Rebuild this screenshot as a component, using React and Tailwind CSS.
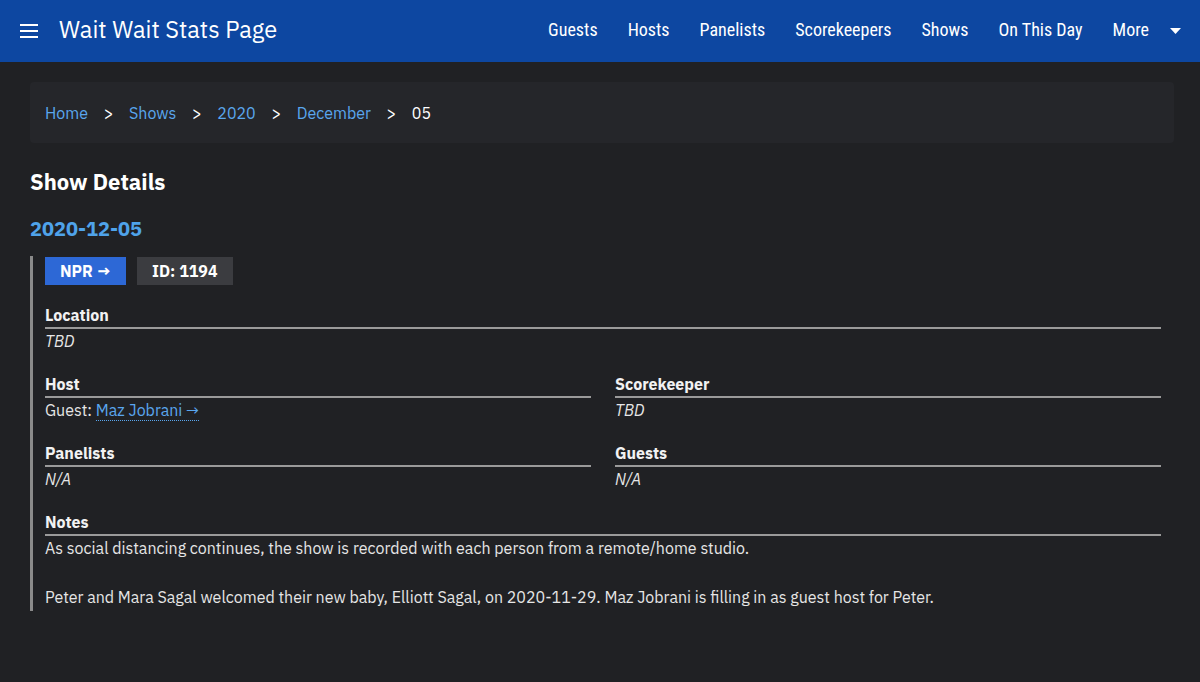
import React from 'react';

const navItems = ['Guests', 'Hosts', 'Panelists', 'Scorekeepers', 'Shows', 'On This Day'];

const Field = ({ label, children }) => (
  <div className="mb-[19px]">
    <div className="font-bold leading-6 text-[#f2f2f2] border-b-2 border-[#9a9a9a]">{label}</div>
    <div className="leading-6">{children}</div>
  </div>
);

const App = () => {
  return (
    <div
      className="min-h-[682px] bg-[#202124] text-[#e6e6e6] text-base"
      style={{ fontFamily: '"IBM Plex Sans", "Noto Sans", sans-serif' }}
    >
      <header className="h-[62px] bg-[#0d47a1] flex items-center pl-5 pr-[19px]">
        <svg width="18" height="14" viewBox="0 0 18 14" className="mr-[21px]">
          <rect x="0" y="0" width="18" height="2" fill="#fff" />
          <rect x="0" y="6" width="18" height="2" fill="#fff" />
          <rect x="0" y="12" width="18" height="2" fill="#fff" />
        </svg>
        <div className="text-[23.6px] text-white leading-none pb-[2px]">Wait Wait Stats Page</div>
        <nav
          className="ml-auto flex items-center gap-[30px] text-[18px] text-white leading-none pb-[3px]"
          style={{ fontFamily: '"Roboto Condensed", "DejaVu Sans Condensed", "Liberation Sans Narrow", Roboto, sans-serif' }}
        >
          {navItems.map((n) => (
            <span key={n}>{n}</span>
          ))}
          <span className="flex items-center gap-[21px]">
            More
            <svg width="11" height="6" viewBox="0 0 11 6" className="mt-[2px]">
              <path d="M0 0 L11 0 L5.5 6 Z" fill="#fff" />
            </svg>
          </span>
        </nav>
      </header>

      <main className="px-[30px] pt-5 pb-8">
        <div className="bg-[#25262a] rounded mr-[-4px] h-[61px] px-[15px] flex items-center gap-[15.7px] text-base">
          <a className="text-[#5aa6ee]">Home</a>
          <span className="text-white">&gt;</span>
          <a className="text-[#5aa6ee]">Shows</a>
          <span className="text-white">&gt;</span>
          <a className="text-[#5aa6ee]">2020</a>
          <span className="text-white">&gt;</span>
          <a className="text-[#5aa6ee]">December</a>
          <span className="text-white">&gt;</span>
          <span className="text-white">05</span>
        </div>

        <h1 className="mt-[23px] text-[22px] font-bold text-white leading-8">Show Details</h1>
        <h2 className="mt-[17px] text-[20px] font-bold text-[#4fa3ea] leading-7">2020-12-05</h2>

        <div className="mt-[13px] border-l-[3px] border-[#8a8a8a] pl-3 pr-[9px] pb-[2px]">
          <div className="flex gap-[11px] mb-[18px] pt-[1px]">
            <span className="bg-[#2d68d6] text-white font-bold px-[15px] h-7 flex items-center">NPR →</span>
            <span className="bg-[#3b3c40] text-white font-bold px-[15px] h-7 flex items-center">ID: 1194</span>
          </div>

          <Field label="Location">
            <i>TBD</i>
          </Field>

          <div className="grid grid-cols-2 gap-x-6">
            <Field label="Host">
              Guest:{' '}
              <a className="text-[#5aa6ee] border-b border-dotted border-[#5aa6ee]">Maz Jobrani →</a>
            </Field>
            <Field label="Scorekeeper">
              <i>TBD</i>
            </Field>
            <Field label="Panelists">
              <i>N/A</i>
            </Field>
            <Field label="Guests">
              <i>N/A</i>
            </Field>
          </div>

          <div>
            <div className="font-bold leading-6 text-[#f2f2f2] border-b-2 border-[#9a9a9a]">Notes</div>
            <p className="leading-6 mb-[25px]">
              As social distancing continues, the show is recorded with each person from a remote/home studio.
            </p>
            <p className="leading-6">
              Peter and Mara Sagal welcomed their new baby, Elliott Sagal, on 2020-11-29. Maz Jobrani is filling in as guest host for Peter.
            </p>
          </div>
        </div>
      </main>
    </div>
  );
};

export default App;
